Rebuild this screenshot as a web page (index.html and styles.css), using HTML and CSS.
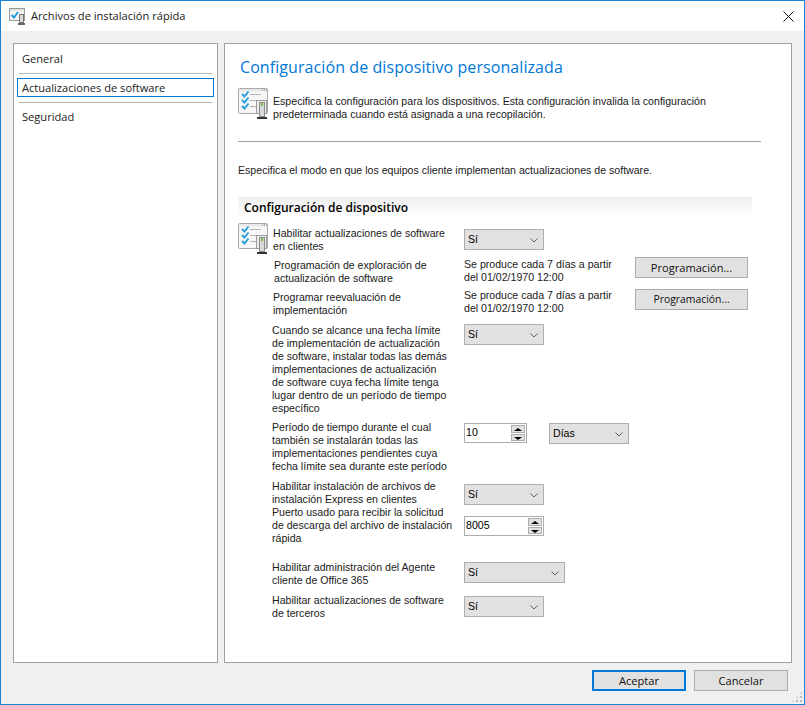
FILE: index.html
```html
<!DOCTYPE html>
<html lang="es">
<head>
<meta charset="utf-8">
<title>Archivos de instalación rápida</title>
<link rel="stylesheet" href="styles.css">
</head>
<body>
<svg class="defs" width="0" height="0" aria-hidden="true">
  <symbol id="cfg" viewBox="0 0 31 32">
    <rect x="0.5" y="0.5" width="29" height="25" rx="1" fill="#f7f7f7" stroke="#a9a9a9"/>
    <path d="M1 1h28v2.500H1z" fill="#e8e8e8"/>
    <path d="M24 2h1M26 2h1M28 2h1" stroke="#777"/>
    <path d="M4 6l2.500 2.500 4-5M4 12l2.500 2.500 4-5M4 18l2.500 2.500 4-5" fill="none" stroke="#2c9fdc" stroke-width="2"/>
    <path d="M12 6.500h11M12 12.500h6M12 18.500h6" stroke="#b5b5b5"/>
    <rect x="18.500" y="12.500" width="10" height="13" fill="#eee" stroke="#9c9c9c"/>
    <rect x="21.500" y="14.500" width="5" height="14" fill="#d9d9d9" stroke="#8c8c8c"/>
    <rect x="23" y="15" width="2" height="3" fill="#76c043"/>
    <path d="M19 30h10" stroke="#333" stroke-width="2"/>
  </symbol>
  <symbol id="chev" viewBox="0 0 8 5">
    <path d="M0.500 0.500L4 4l3.500-3.500" fill="none" stroke="#606060"/>
  </symbol>
</svg>
<div class="window">
  <header class="titlebar">
    <svg class="title-icon" viewBox="0 0 16 17">
      <rect x="0.500" y="0.500" width="15" height="12" fill="#f4f4f4" stroke="#999"/>
      <path d="M1 1h14v1.500H1z" fill="#ddd"/>
      <path d="M2.500 7l2.500 2.500 4-5.500" fill="none" stroke="#1b95dc" stroke-width="1.800"/>
      <rect x="10.500" y="6.500" width="4" height="8" fill="#ddd" stroke="#777"/>
      <path d="M9 16h7" stroke="#333" stroke-width="1.500"/>
    </svg>
    <span class="title-text">Archivos de instalación rápida</span>
    <svg class="close" viewBox="0 0 11 11"><path d="M0.500 0.500l10 10M10.500 0.500l-10 10" stroke="#111" stroke-width="1"/></svg>
  </header>
  <div class="content">
    <div class="panes">
      <nav class="sidebar">
        <div class="nav-item first">General</div>
        <div class="nav-sep"></div>
        <div class="nav-item selected">Actualizaciones de software</div>
        <div class="nav-sep second"></div>
        <div class="nav-item last">Seguridad</div>
      </nav>
      <main class="main">
        <h1 class="heading">Configuración de dispositivo personalizada</h1>
        <div class="intro">
          <svg class="cfg-icon"><use href="#cfg"/></svg>
          <p class="intro-text">Especifica la configuración para los dispositivos. Esta configuración invalida la configuración predeterminada cuando está asignada a una recopilación.</p>
        </div>
        <div class="rule"></div>
        <p class="lead">Especifica el modo en que los equipos cliente implementan actualizaciones de software.</p>
        <div class="section-head">Configuración de dispositivo</div>
        <div class="form">
          <svg class="cfg-icon form-icon"><use href="#cfg"/></svg>

          <div class="label x273 p1">Habilitar actualizaciones de software<br>en clientes</div>
          <div class="ctl p3"><div class="combo">Sí<svg class="chev"><use href="#chev"/></svg></div></div>

          <div class="label x274 p2">Programación de exploración de<br>actualización de software</div>
          <div class="ctl"><div class="value p1">Se produce cada 7 días a partir<br>del 01/02/1970 12:00</div><button class="btn sched">Programación...</button></div>

          <div class="label x273 p2">Programar reevaluación de<br>implementación</div>
          <div class="ctl"><div class="value">Se produce cada 7 días a partir<br>del 01/02/1970 12:00</div><button class="btn sched alt">Programación...</button></div>

          <div class="label p1">Cuando se alcance una fecha límite<br>de implementación de actualización<br>de software, instalar todas las demás<br>implementaciones de actualización<br>de software cuya fecha límite tenga<br>lugar dentro de un período de tiempo<br>específico</div>
          <div class="ctl p1"><div class="combo">Sí<svg class="chev"><use href="#chev"/></svg></div></div>

          <div class="label">Período de tiempo durante el cual<br>también se instalarán todas las<br>implementaciones pendientes cuya<br>fecha límite sea durante este período</div>
          <div class="ctl p2 gap22">
            <div class="spin w63"><span>10</span><div class="arrows"><i class="up"></i><i class="down"></i></div></div>
            <div class="combo">Días<svg class="chev"><use href="#chev"/></svg></div>
          </div>

          <div class="label">Habilitar instalación de archivos de<br>instalación Express en clientes</div>
          <div class="ctl p4"><div class="combo">Sí<svg class="chev"><use href="#chev"/></svg></div></div>

          <div class="label">Puerto usado para recibir la solicitud<br>de descarga del archivo de instalación<br>rápida</div>
          <div class="ctl p10"><div class="spin w80"><span>8005</span><div class="arrows"><i class="up"></i><i class="down"></i></div></div></div>

          <div class="label">Habilitar administración del Agente<br>cliente de Office 365</div>
          <div class="ctl p1"><div class="combo wide">Sí<svg class="chev"><use href="#chev"/></svg></div></div>

          <div class="label">Habilitar actualizaciones de software<br>de terceros</div>
          <div class="ctl p2"><div class="combo">Sí<svg class="chev"><use href="#chev"/></svg></div></div>
        </div>
      </main>
    </div>
    <footer class="footer">
      <button class="btn action primary">Aceptar</button>
      <button class="btn action">Cancelar</button>
    </footer>
    <div class="grip"></div>
  </div>
</div>
</body>
</html>
```
FILE: styles.css
```css
* { box-sizing: border-box; }
html, body { margin: 0; padding: 0; }
body { width: 805px; height: 705px; overflow: hidden; font-family: "Liberation Sans", Arial, sans-serif; font-size: 10.6px; line-height: 13px; color: #000; }
.defs { position: absolute; }
.window { width: 805px; height: 705px; border: 1px solid #1883d7; display: flex; flex-direction: column; background: #f0f0f0; }
.titlebar { height: 30px; background: #fff; display: flex; align-items: center; padding: 0 10px 0 8px; flex: none; }
.title-icon { width: 16px; height: 17px; }
.title-text { margin: 0 0 2px 6px; font-family: "Open Sans", sans-serif; font-size: 11.1px; color: #1a1a1a; }
.close { width: 11px; height: 11px; margin-left: auto; }
.content { flex: 1; position: relative; padding: 12px 12px 0; }
.panes { display: flex; gap: 6px; height: 620px; }
.sidebar { width: 205px; background: #fff; border: 1px solid #a0a0a0; padding: 6px 3px 0; font-family: "Open Sans", sans-serif; font-size: 11.1px; color: #222; }
.nav-item { height: 19px; line-height: 17px; padding-left: 4px; border: 1px solid transparent; }
.nav-item.first { line-height: 15px; }
.nav-item.last { margin-top: 4px; }
.nav-item.selected { border-color: #0078d7; }
.nav-sep { height: 1px; background: #b4b4b4; margin: 4px 2px 4px; }
.nav-sep.second { margin-top: 5px; }
.main { width: 568px; background: #fff; border: 1px solid #a0a0a0; padding: 12px 0 0 13px; }
.heading { margin: 0 0 0 2px; font-family: "Open Sans", sans-serif; font-weight: 400; font-size: 16px; letter-spacing: 0.08px; line-height: 22px; color: #0078d7; }
.intro { display: flex; margin-top: 10px; height: 39px; }
.cfg-icon { width: 31px; height: 32px; flex: none; }
.intro-text { margin: 7px 0 0 4px; width: 478px; color: #1a1a1a; }
.rule { width: 523px; height: 1px; background: #a0a0a0; margin-top: 14px; }
.lead { margin: 22px 0 0; color: #1a1a1a; }
.section-head { width: 514px; height: 21px; margin-top: 20px; padding-left: 6px; background: linear-gradient(to bottom, #efefef, #fff); font-family: "Open Sans", sans-serif; font-weight: 600; font-size: 12px; line-height: 21px; color: #000; }
.form { position: relative; display: grid; grid-template-columns: 192px 1fr; grid-template-rows: 31px 32px 34px 98px 59px 26px 55px 33px auto; margin: 8px 0 0 34px; color: #1a1a1a; }
.form-icon { position: absolute; left: -34px; top: -3px; }
.x273 { padding-left: 1px; }
.x274 { padding-left: 2px; }
.p1 { padding-top: 1px; }
.p2 { padding-top: 2px; }
.p3 { padding-top: 3px; }
.p4 { padding-top: 4px; }
.p10 { padding-top: 10px; }
.ctl { display: flex; align-items: flex-start; }
.gap22 { gap: 22px; }
.value { width: 171px; }
.combo { position: relative; width: 80px; height: 21px; background: #e1e1e1; border: 1px solid #adadad; padding-left: 3px; line-height: 19px; color: #000; }
.combo.wide { width: 101px; }
.chev { position: absolute; right: 5px; top: 8px; width: 8px; height: 5px; }
.spin { display: flex; height: 20px; background: #fff; border: 1px solid #adadad; padding-left: 1px; line-height: 17px; color: #000; justify-content: space-between; }
.w63 { width: 63px; }
.w80 { width: 80px; }
.arrows { width: 14px; margin: 1px; display: flex; flex-direction: column; gap: 1px; background: #fff; }
.arrows i { flex: 1; background: #e1e1e1; border: 1px solid #adadad; position: relative; }
.arrows i::after { content: ""; position: absolute; left: 2px; border: 4px solid transparent; border-top-width: 0; border-bottom-width: 0; }
.arrows .up::after { top: 2px; border-bottom: 3px solid #000; }
.arrows .down::after { top: 2px; border-top: 3px solid #000; }
.btn { background: #e1e1e1; border: 1px solid #adadad; padding: 0; font-family: "Open Sans", sans-serif; font-size: 11.1px; color: #111; }
.sched { width: 113px; height: 21px; line-height: 17px; }
.sched.alt { font-size: 10.4px; }
.footer { display: flex; justify-content: flex-end; gap: 8px; padding: 7px 4px 0 0; }
.action { width: 94px; height: 21px; line-height: 17px; }
.primary { border: 2px solid #0078d7; }
.grip { position: absolute; right: 2px; bottom: 2px; width: 10px; height: 10px; background: radial-gradient(circle at 1px 1px, #bdbdbd 1px, transparent 1px) 0 0 / 4px 4px; clip-path: polygon(100% 0, 100% 100%, 0 100%); }
```
